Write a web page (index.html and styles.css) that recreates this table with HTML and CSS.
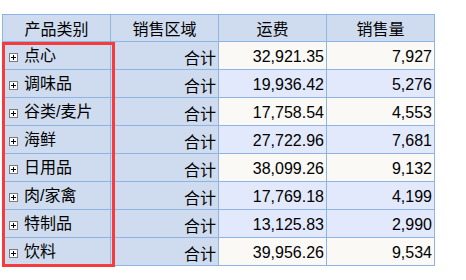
FILE: index.html
```html
<html>

<head>
    <title>产品销售</title>
    <link rel="stylesheet" href="styles.css">
</head>

<body>
    <div class="wrap">
        <table class="grid">
            <tr class="head">
                <th>产品类别</th>
                <th>销售区域</th>
                <th>运费</th>
                <th>销售量</th>
            </tr>
            <tr class="odd">
                <td class="cat"><span class="plus"></span>点心</td>
                <td class="region">合计</td>
                <td>32,921.35</td>
                <td>7,927</td>
            </tr>
            <tr class="even">
                <td class="cat"><span class="plus"></span>调味品</td>
                <td class="region">合计</td>
                <td>19,936.42</td>
                <td>5,276</td>
            </tr>
            <tr class="odd">
                <td class="cat"><span class="plus"></span>谷类/麦片</td>
                <td class="region">合计</td>
                <td>17,758.54</td>
                <td>4,553</td>
            </tr>
            <tr class="even">
                <td class="cat"><span class="plus"></span>海鲜</td>
                <td class="region">合计</td>
                <td>27,722.96</td>
                <td>7,681</td>
            </tr>
            <tr class="odd">
                <td class="cat"><span class="plus"></span>日用品</td>
                <td class="region">合计</td>
                <td>38,099.26</td>
                <td>9,132</td>
            </tr>
            <tr class="even">
                <td class="cat"><span class="plus"></span>肉/家禽</td>
                <td class="region">合计</td>
                <td>17,769.18</td>
                <td>4,199</td>
            </tr>
            <tr class="even">
                <td class="cat"><span class="plus"></span>特制品</td>
                <td class="region">合计</td>
                <td>13,125.83</td>
                <td>2,990</td>
            </tr>
            <tr class="odd">
                <td class="cat"><span class="plus"></span>饮料</td>
                <td class="region">合计</td>
                <td>39,956.26</td>
                <td>9,534</td>
            </tr>
        </table>
        <div class="mark"></div>
    </div>
</body>

</html>
```
FILE: styles.css
```css
body {
    margin: 0;
    background: white;
    font-family: "Liberation Sans", "Noto Sans CJK SC", sans-serif;
    font-size: 12px;
    color: black;
}

.wrap {
    position: relative;
    padding: 14px 0 0 2px;
}

.grid {
    border-collapse: collapse;
    table-layout: fixed;
    width: 433px;
}

.grid th,
.grid td {
    border: 1px solid #8db4e2;
    height: 27px;
    padding: 0 2px 0 0;
    text-align: right;
    white-space: nowrap;
}

.grid th {
    background-color: #cfdcef;
    font-weight: normal;
    text-align: center;
    padding: 0;
    width: 107px;
}

.grid td.cat,
.grid td.region {
    background-color: #cfdcef;
}

.grid td.region {
    padding-top: 3px;
}

.grid td.cat {
    text-align: left;
    padding: 0 0 3px 6px;
}

.odd td {
    background-color: #faf9f5;
    padding-top: 3px;
}

.even td {
    background-color: #e3e9fc;
    padding-top: 3px;
}

.plus {
    display: inline-block;
    position: relative;
    width: 7px;
    height: 7px;
    border: 1px solid #7a7a7a;
    background: white;
    margin-right: 6px;
    vertical-align: -1px;
}

.plus::before,
.plus::after {
    content: "";
    position: absolute;
    background: black;
}

.plus::before {
    left: 1px;
    top: 3px;
    width: 5px;
    height: 1px;
}

.plus::after {
    left: 3px;
    top: 1px;
    width: 1px;
    height: 5px;
}

.mark {
    position: absolute;
    left: 2px;
    top: 42px;
    width: 107px;
    height: 219px;
    border: 3px solid #f53b3b;
}
```
